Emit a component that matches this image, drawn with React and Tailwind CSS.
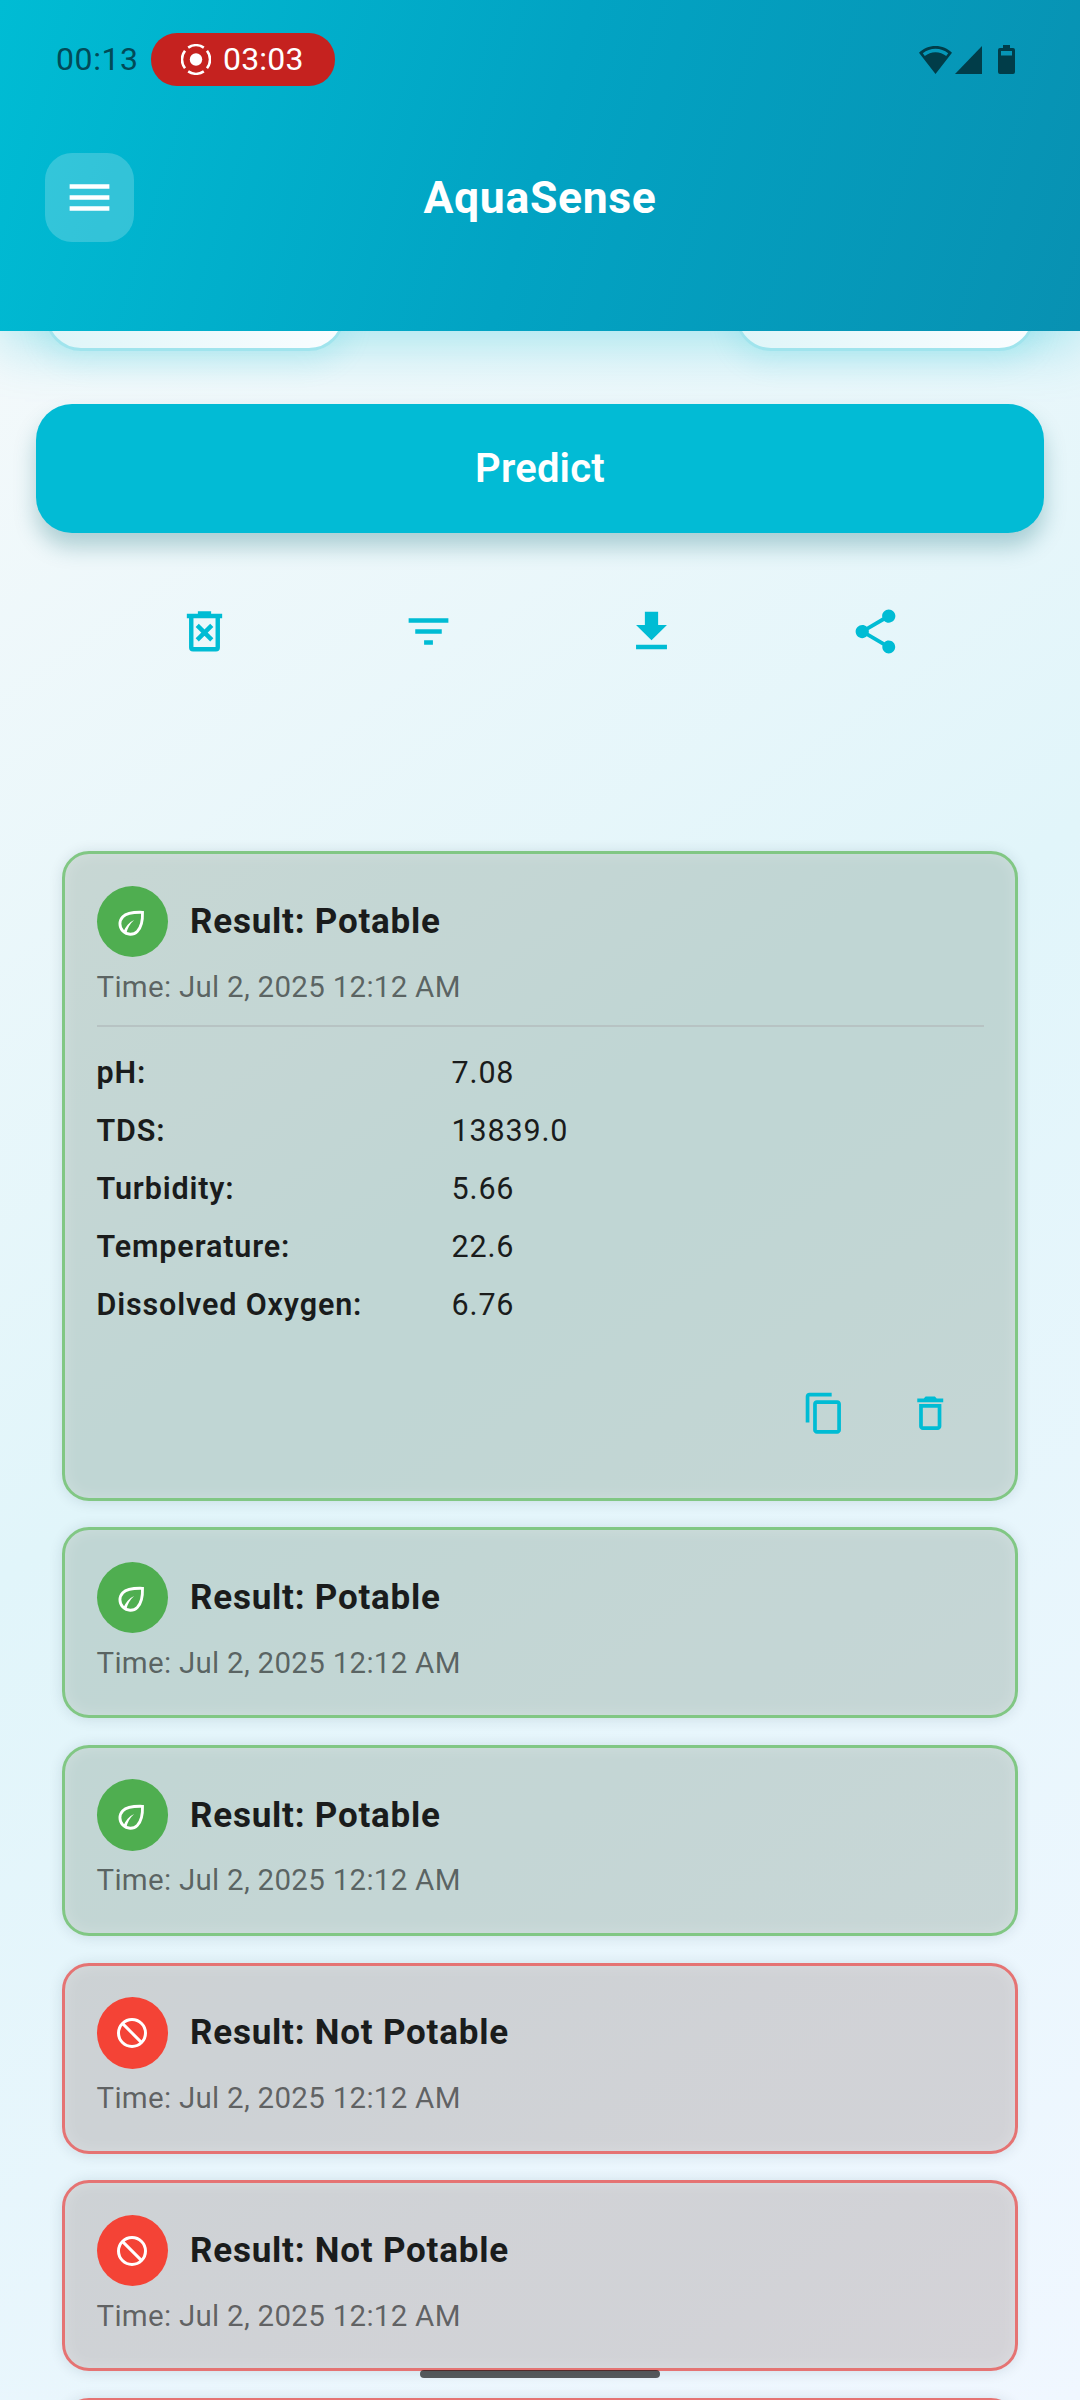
import React from "react";
import { MdMenu, MdFilterList, MdShare, MdContentCopy, MdOutlineDelete } from "react-icons/md";

function RecordIcon() {
  return (
    <svg className="h-[31px] w-[30px]" viewBox="0 0 30 31" fill="none" stroke="white" strokeWidth="2.6">
      <circle cx="15" cy="15.5" r="6.2" fill="white" stroke="none" />
      <path d="M7.2 3.6A14 14 0 0 1 22.8 3.6M7.2 27.4A14 14 0 0 0 22.8 27.4" />
      <path d="M4 6.8A14 14 0 0 0 4 24.2M26 6.8A14 14 0 0 1 26 24.2" />
    </svg>
  );
}

function WifiIcon() {
  return (
    <svg className="h-[28px] w-[33px]" viewBox="0 0 33 28" fill="#013d49">
      <path
        fillRule="evenodd"
        d="M16.5 0C10 0 4.200 2.600 0 6.800L16.500 28L33 6.800C28.800 2.600 23 0 16.500 0ZM3.800 7.200A20 20 0 0 1 29.200 7.200L27.200 10A17 17 0 0 0 5.800 10Z"
      />
    </svg>
  );
}

function DeleteForeverIcon() {
  return (
    <svg className="size-[53px]" viewBox="0 0 24 24" fill="none" stroke="currentColor" strokeWidth="2">
      <path d="M6 5V19.200Q6 20 6.800 20H17.200Q18 20 18 19.200V5" />
      <path d="M4 5H20M9 3.800H15" />
      <path d="M8.700 9.200L15.300 15.800M15.300 9.200L8.700 15.800" />
    </svg>
  );
}

function DownloadIcon() {
  return (
    <svg className="size-[53px]" viewBox="0 0 24 24" fill="currentColor">
      <path d="M19 9h-4V3H9v6H5l7 7 7-7zM5 18v2h14v-2H5z" />
    </svg>
  );
}

function LeafIcon() {
  return (
    <svg className="size-[36px]" viewBox="0 0 24 24" fill="none" stroke="white" strokeWidth="1.9">
      <path d="M19 6.200C12 6 8 6.900 5.900 9.100C3.300 11.800 3.300 16 5.900 18.700C8.600 21.400 12.900 21.600 15.500 19C18.100 16.400 19.200 12.200 19 6.200Z" />
      <path d="M13.400 11.400C10 13 7.800 15.800 6.300 19L8.200 20.400C9 17 10.500 14 13.400 11.400Z" fill="white" stroke="none" />
    </svg>
  );
}

function BanIcon() {
  return (
    <svg className="size-[36px]" viewBox="0 0 24 24" fill="none" stroke="white" strokeWidth="2">
      <circle cx="12" cy="12" r="9" />
      <path d="M5.600 5.600L18.400 18.400" />
    </svg>
  );
}

const readings = [
  ["pH:", "7.08"],
  ["TDS:", "13839.0"],
  ["Turbidity:", "5.66"],
  ["Temperature:", "22.6"],
  ["Dissolved Oxygen:", "6.76"],
];

function CardFrame({ potable, open, children }) {
  return (
    <article
      className={
        "shrink-0 rounded-[27px] border-[3px] px-[31.500px] pt-[31.500px] shadow-[0_1px_14px_rgba(0,40,60,0.12),inset_0_0_16px_rgba(255,255,255,0.22)] " +
        (open ? "h-[649.500px] " : "h-[191px] ") +
        (potable ? "border-[#81c784] bg-[rgba(60,90,60,0.2)]" : "border-[#e57373] bg-[rgba(106,72,58,0.2)]")
      }
    >
      {children}
    </article>
  );
}

function ResultCard({ potable, open }) {
  return (
    <CardFrame potable={potable} open={open}>
      <div className="flex items-center gap-[22px]">
        <div
          className={
            "flex size-[71.500px] items-center justify-center rounded-full " +
            (potable ? "bg-[#4fae50]" : "bg-[#f44336]")
          }
        >
          {potable ? <LeafIcon /> : <BanIcon />}
        </div>
        <h2 className="pt-[1px] text-[35px] leading-[42px] font-bold tracking-[0.780px] text-[#1a1c1c]">
          Result: {potable ? "Potable" : "Not Potable"}
        </h2>
      </div>
      <p className="mt-[11.500px] text-[29.500px] leading-[36px] tracking-[0.280px] text-black/55">
        Time: Jul 2, 2025 12:12 AM
      </p>
      {open && (
        <>
          <div className="mt-[20px] h-[2px] bg-[#b7c3c3]" />
          <dl className="mt-[17.900px]">
            {readings.map(([label, value]) => (
              <div key={label} className="flex h-[57.800px] items-center text-[30.500px] text-[#1a1c1c]">
                <dt className="w-[355px] font-semibold tracking-[0.860px]">{label}</dt>
                <dd className="tracking-[0.850px]">{value}</dd>
              </div>
            ))}
          </dl>
          <div className="mt-[57.500px] flex justify-end gap-[62px] pr-[31px] text-[#00bcd4]">
            <MdContentCopy className="size-[44.500px]" />
            <MdOutlineDelete className="size-[44.500px]" />
          </div>
        </>
      )}
    </CardFrame>
  );
}

function FieldBox() {
  return (
    <div className="h-[120px] w-[300px] shrink-0 rounded-[36px] border-[3px] border-[#a0e4ed] bg-linear-to-r from-[#def5f8] to-[#fafdff] shadow-[0_10px_30px_rgba(0,188,212,0.14)]" />
  );
}

export default function App() {
  return (
    <div className="relative flex h-[2400px] w-[1080px] flex-col overflow-hidden bg-[linear-gradient(145deg,#f8fafb_0%,#e1f5fa_50%,#f0f7ff_100%)] font-[Roboto,sans-serif]">
      <header className="h-[331px] shrink-0 bg-[linear-gradient(107deg,#00bcd4_0%,#02a3c3_50%,#0891b2_100%)] shadow-[0_14px_50px_rgba(0,188,212,0.3)]">
        <div className="flex h-[119px] items-center pr-[65px] pl-[56px]">
          <span className="w-[95px] pb-[2px] text-[32px] tracking-[0.600px] text-[#014b58]">00:13</span>
          <div className="flex h-[53px] w-[184px] items-center rounded-[26px] bg-[#c5221f] pl-[30px]">
            <RecordIcon />
            <span className="ml-[12px] pb-[2px] text-[32px] tracking-[0.200px] text-white">03:03</span>
          </div>
          <div className="ml-auto flex items-center">
            <WifiIcon />
            <svg className="ml-[3px] h-[28px] w-[27px]" viewBox="0 0 27 28" fill="#013d49">
              <path d="M27 0V28H0Z" />
            </svg>
            <svg className="ml-[16px] h-[29px] w-[17px]" viewBox="0 0 17 29" fill="#013d49">
              <path
                fillRule="evenodd"
                d="M5 0H12V3H15Q17 3 17 5V27Q17 29 15 29H2Q0 29 0 27V5Q0 3 2 3H5ZM3 6V10.500H14V6Z"
              />
            </svg>
          </div>
        </div>
        <div className="grid grid-cols-[1fr_auto_1fr] items-center px-[44.500px] pt-[34px]">
          <button className="flex size-[89px] items-center justify-center rounded-[27px] bg-white/20 text-white">
            <MdMenu className="size-[53px]" />
          </button>
          <h1 className="text-[44.500px] leading-[54px] font-bold tracking-[0.650px] text-white">AquaSense</h1>
        </div>
      </header>

      <main className="flex min-h-0 flex-1 flex-col overflow-hidden">
        <div className="flex h-[19.500px] shrink-0 items-end justify-between px-[45px]">
          <FieldBox />
          <FieldBox />
        </div>
        <button className="mx-[36px] mt-[53.500px] h-[129px] shrink-0 rounded-[36px] bg-[#02bbd5] text-[40px] font-semibold tracking-[0.200px] text-white shadow-[0_14px_22px_rgba(0,100,110,0.28)]">
          Predict
        </button>
        <div className="mt-[72px] flex h-[53px] shrink-0 justify-around px-[93px] text-[#00bcd4]">
          <DeleteForeverIcon />
          <MdFilterList className="size-[53px]" />
          <DownloadIcon />
          <MdShare className="size-[53px]" />
        </div>
        <section className="mt-[193px] flex flex-col gap-[26.700px] px-[62px]">
          <ResultCard potable open />
          <ResultCard potable />
          <ResultCard potable />
          <ResultCard />
          <ResultCard />
          <CardFrame />
        </section>
      </main>

      <div className="absolute top-[2370px] left-[420px] h-[8px] w-[240px] rounded-full bg-black/63" />
    </div>
  );
}
